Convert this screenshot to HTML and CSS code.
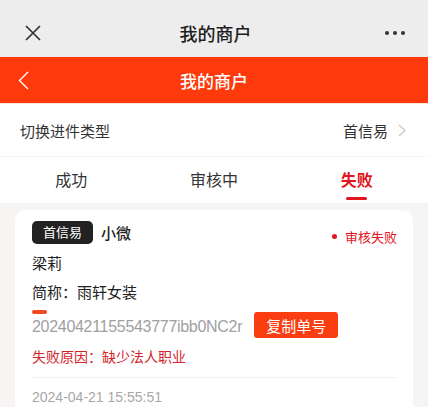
FILE: index.html
```html
<!DOCTYPE html>
<html lang="zh-CN">
<head>
    <meta charset="UTF-8">
    <title>我的商户</title>
    <link rel="stylesheet" href="styles.css">
</head>
<body>
    <!-- 容器顶栏 -->
    <div class="topbar">
        <div class="bar-left">
            <svg width="16" height="16" viewBox="0 0 16 16"><path d="M1 1L15 15M15 1L1 15" stroke="#333" stroke-width="1.7" fill="none"/></svg>
        </div>
        <div class="bar-title">我的商户</div>
        <div class="bar-right">
            <svg width="22" height="6" viewBox="0 0 22 6"><circle cx="3" cy="3" r="2" fill="#333"/><circle cx="11" cy="3" r="2" fill="#333"/><circle cx="19" cy="3" r="2" fill="#333"/></svg>
        </div>
    </div>

    <!-- 页面标题 -->
    <div class="header">
        <div class="bar-left">
            <svg width="11" height="19" viewBox="0 0 11 19"><path d="M10 1L1.5 9.5L10 18" stroke="#fff" stroke-width="1.4" fill="none"/></svg>
        </div>
        <div class="bar-title">我的商户</div>
        <div class="bar-right"></div>
    </div>

    <div class="switch-row">
        <span>切换进件类型</span>
        <span class="switch-value">首信易
            <svg width="8" height="13" viewBox="0 0 8 13"><path d="M1 1L7 6.5L1 12" stroke="#c8c8c8" stroke-width="1.2" fill="none"/></svg>
        </span>
    </div>

    <div class="tabs">
        <div class="tab">成功</div>
        <div class="tab">审核中</div>
        <div class="tab active">失败</div>
    </div>

    <div class="list">
        <div class="card">
            <div class="card-head">
                <span class="badge">首信易</span>
                <span class="type">小微</span>
                <span class="status"><i class="dot"></i>审核失败</span>
            </div>
            <div class="line">梁莉</div>
            <div class="line">简称：雨轩女装</div>
            <div class="order-row">
                <div class="order-col">
                    <span class="dash"></span>
                    <span class="order-no">20240421155543777ibb0NC2r</span>
                </div>
                <button class="copy-btn">复制单号</button>
            </div>
            <div class="reason">失败原因：缺少法人职业</div>
            <div class="divider"></div>
            <div class="date">2024-04-21 15:55:51</div>
        </div>
    </div>
</body>
</html>
```

FILE: styles.css
```css
body {
    margin: 0;
    font-family: 'Liberation Sans', 'Noto Sans CJK SC', sans-serif;
    color: #222;
    background: #f7f5f3;
}
.topbar, .header {
    display: grid;
    grid-template-columns: 1fr auto 1fr;
    align-items: center;
}
.topbar {
    height: 48px;
    padding: 9px 22px 0 25px;
    background: #ededed;
}
.topbar .bar-title {
    font-size: 18px;
    font-weight: 500;
    color: #1e1e1e;
}
.bar-left svg, .bar-right svg {
    display: block;
}
.bar-right {
    display: flex;
    justify-content: flex-end;
}
.header {
    height: 46px;
    padding: 0 18px;
    background: #fe3a0c;
    border-bottom: 1px solid #f8e7df;
}
.header .bar-title {
    font-size: 17px;
    font-weight: 500;
    color: #fff;
}
.switch-row {
    display: flex;
    justify-content: space-between;
    align-items: center;
    height: 52px;
    padding: 0 22px 0 20px;
    background: #fff;
    border-bottom: 1px solid #f6f6f6;
    font-size: 15px;
    color: #333;
}
.switch-value {
    display: flex;
    align-items: center;
    gap: 10px;
}
.tabs {
    display: grid;
    grid-template-columns: 1fr 1fr 1fr;
    height: 46px;
    background: #fff;
}
.tab {
    text-align: center;
    font-size: 16px;
    line-height: 22px;
    padding-top: 13px;
    color: #333;
}
.tab.active {
    color: #e3161e;
    font-weight: 700;
}
.tab.active::after {
    content: '';
    display: block;
    width: 21px;
    height: 3px;
    margin: 5px auto 0;
    border-radius: 2px;
    background: #e3161e;
}
.list {
    padding: 7px 15px;
}
.card {
    background: #fff;
    border-radius: 10px;
    padding: 11px 16px 20px 17px;
}
.card-head {
    display: flex;
    align-items: center;
    height: 23px;
}
.badge {
    height: 23px;
    line-height: 23px;
    padding: 0 11px;
    border-radius: 5px;
    background: #222;
    color: #fff;
    font-size: 13px;
}
.type {
    margin-left: 8px;
    font-size: 15px;
    font-weight: 500;
}
.status {
    margin-left: auto;
    margin-top: 7px;
    display: flex;
    align-items: center;
    gap: 8px;
    font-size: 13px;
    color: #e3161e;
}
.dot {
    width: 5px;
    height: 5px;
    border-radius: 50%;
    background: #e3161e;
}
.card-head + .line {
    margin-top: 5px;
}
.line {
    font-size: 15px;
    line-height: 29px;
    color: #222;
}
.order-row {
    display: flex;
    align-items: flex-end;
    margin-top: 3px;
}
.order-col {
    display: flex;
    flex-direction: column;
}
.dash {
    width: 15px;
    height: 4px;
    border-radius: 2px;
    background: #f04a22;
    margin-bottom: 2px;
}
.order-no {
    font-size: 16px;
    line-height: 22px;
    letter-spacing: -0.3px;
    color: #a0a0a0;
}
.copy-btn {
    margin-left: 12px;
    height: 26px;
    padding: 0 12px;
    border: none;
    border-radius: 3px;
    background: #fb3e12;
    color: #fff;
    font-family: inherit;
    font-size: 15px;
}
.reason {
    margin-top: 9px;
    font-size: 14px;
    line-height: 20px;
    color: #d3232b;
}
.divider {
    height: 1px;
    margin: 10px 0 0;
    background: #f2f2f2;
}
.date {
    margin-top: 9px;
    font-size: 14px;
    line-height: 20px;
    color: #a8a8a8;
}
```
